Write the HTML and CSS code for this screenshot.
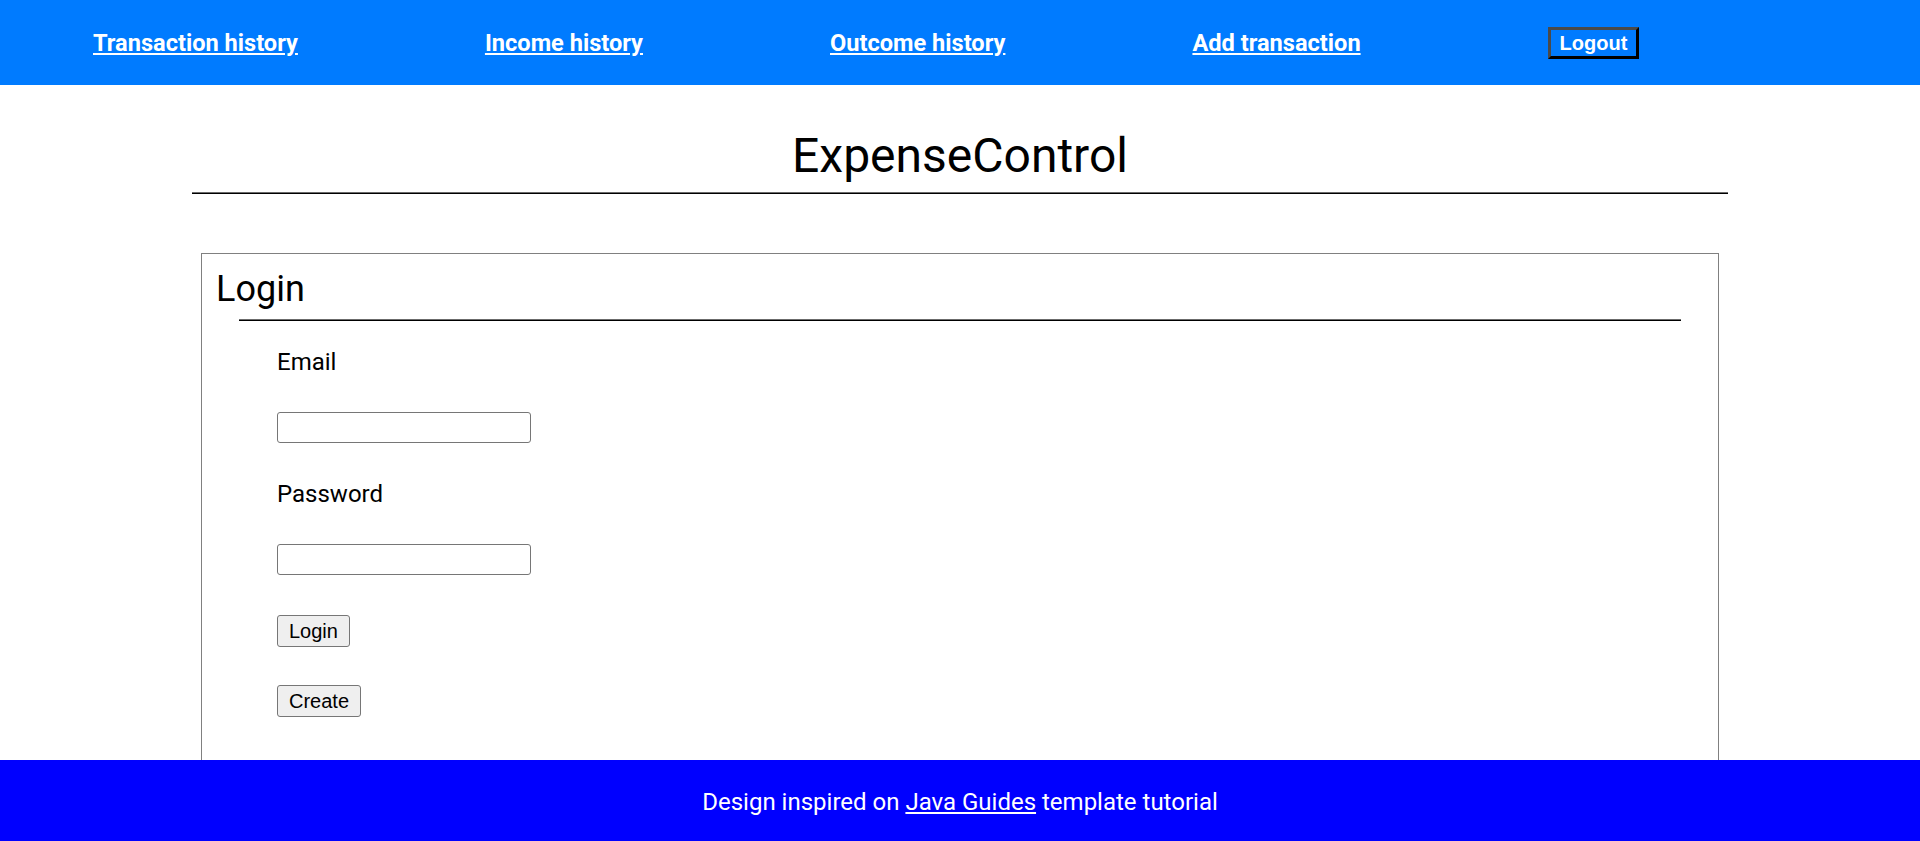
FILE: index.html
```html
<!DOCTYPE html>
<html lang="en">
<head>
<meta charset="utf-8">
<title>ExpenseControl</title>
<link rel="stylesheet" href="styles.css">
</head>
<body>
<nav class="topbar">
  <ul class="nav-list">
    <li><a href="#" class="nav-link">Transaction history</a></li>
    <li><a href="#" class="nav-link">Income history</a></li>
    <li><a href="#" class="nav-link">Outcome history</a></li>
    <li><a href="#" class="nav-link">Add transaction</a></li>
    <li><button type="button" class="logout">Logout</button></li>
  </ul>
</nav>
<main class="page">
  <div class="title-block">
    <h1 class="title">ExpenseControl</h1>
    <hr class="rule">
  </div>
  <fieldset class="card">
    <h2 class="card-title">Login</h2>
    <hr class="card-rule">
    <form class="form">
      <label class="field-label" for="email">Email</label>
      <input class="field-input" id="email" type="email">
      <label class="field-label" for="password">Password</label>
      <input class="field-input last-input" id="password" type="password">
      <button type="button" class="form-btn">Login</button>
      <button type="button" class="form-btn">Create</button>
    </form>
  </fieldset>
</main>
<footer class="footer">
  <p class="footer-text">Design inspired on <a href="#" class="footer-link">Java Guides</a> template tutorial</p>
</footer>
</body>
</html>
```
FILE: styles.css
```css
html, body {
  margin: 0;
  padding: 0;
  background: #ffffff;
}

body {
  font-family: Roboto, "Liberation Sans", sans-serif;
  color: #000000;
}

.topbar {
  background: #007bff;
  height: 85px;
  display: flex;
  align-items: center;
}

.nav-list {
  list-style: none;
  margin: 0;
  padding: 0 0 0 93px;
  display: flex;
  align-items: center;
  gap: 187px;
}

.nav-link {
  color: #ffffff;
  font-size: 23.6px;
  font-weight: 700;
  line-height: 28px;
  text-decoration: underline;
  display: block;
}

.logout {
  font-family: "Liberation Sans", Arial, sans-serif;
  font-weight: 700;
  font-size: 20px;
  line-height: 23px;
  color: #ffffff;
  background: transparent;
  border-width: 3px;
  border-style: solid;
  border-color: #4a4a4a #000000 #000000 #4a4a4a;
  padding: 0 9px;
  height: 32px;
  margin-top: 1px;
}

.page {
  width: 80%;
  margin: 0 auto;
}

.title {
  font-size: 48px;
  font-weight: 400;
  line-height: 56px;
  text-align: center;
  margin: 43px 0 0;
}

.rule {
  border: 0;
  border-top: 1px solid #6b6b6b;
  border-bottom: 1px solid #000000;
  height: 0;
  margin: 8px 0 0;
}

.card {
  margin: 59px 9px 0;
  border: 1px solid #808080;
  padding: 14px 13px 80px;
  min-width: 0;
}

.card-title {
  font-size: 36px;
  font-weight: 400;
  line-height: 42px;
  margin: 0 0 0 1px;
}

.card-rule {
  border: 0;
  border-top: 1px solid #6b6b6b;
  border-bottom: 1px solid #000000;
  height: 0;
  margin: 9px 24px 0 24px;
}

.form {
  display: flex;
  flex-direction: column;
  align-items: flex-start;
  padding-left: 62px;
  margin-top: 27px;
}

.field-label {
  font-size: 24px;
  line-height: 28px;
  margin-bottom: 36px;
}

.field-input {
  box-sizing: border-box;
  width: 254px;
  height: 31px;
  border: 1px solid #767676;
  border-radius: 3px;
  background: #ffffff;
  margin: 0 0 37px;
  padding: 0 3px;
  font-size: 20px;
}

.last-input {
  margin-bottom: 40px;
}

.form-btn {
  box-sizing: border-box;
  font-family: "Liberation Sans", Arial, sans-serif;
  font-size: 20px;
  line-height: 23px;
  height: 32px;
  padding: 0 11px;
  color: #000000;
  background: #efefef;
  border: 1px solid #767676;
  border-radius: 3px;
  margin-bottom: 38px;
}

.footer {
  position: fixed;
  left: 0;
  right: 0;
  bottom: 0;
  height: 81px;
  background: #0000ff;
  display: flex;
  align-items: center;
  justify-content: center;
}

.footer-text {
  margin: 0 0 -2px;
  color: #ffffff;
  font-size: 24px;
  line-height: 28px;
}

.footer-link {
  color: #ffffff;
  text-decoration: underline;
}
```
